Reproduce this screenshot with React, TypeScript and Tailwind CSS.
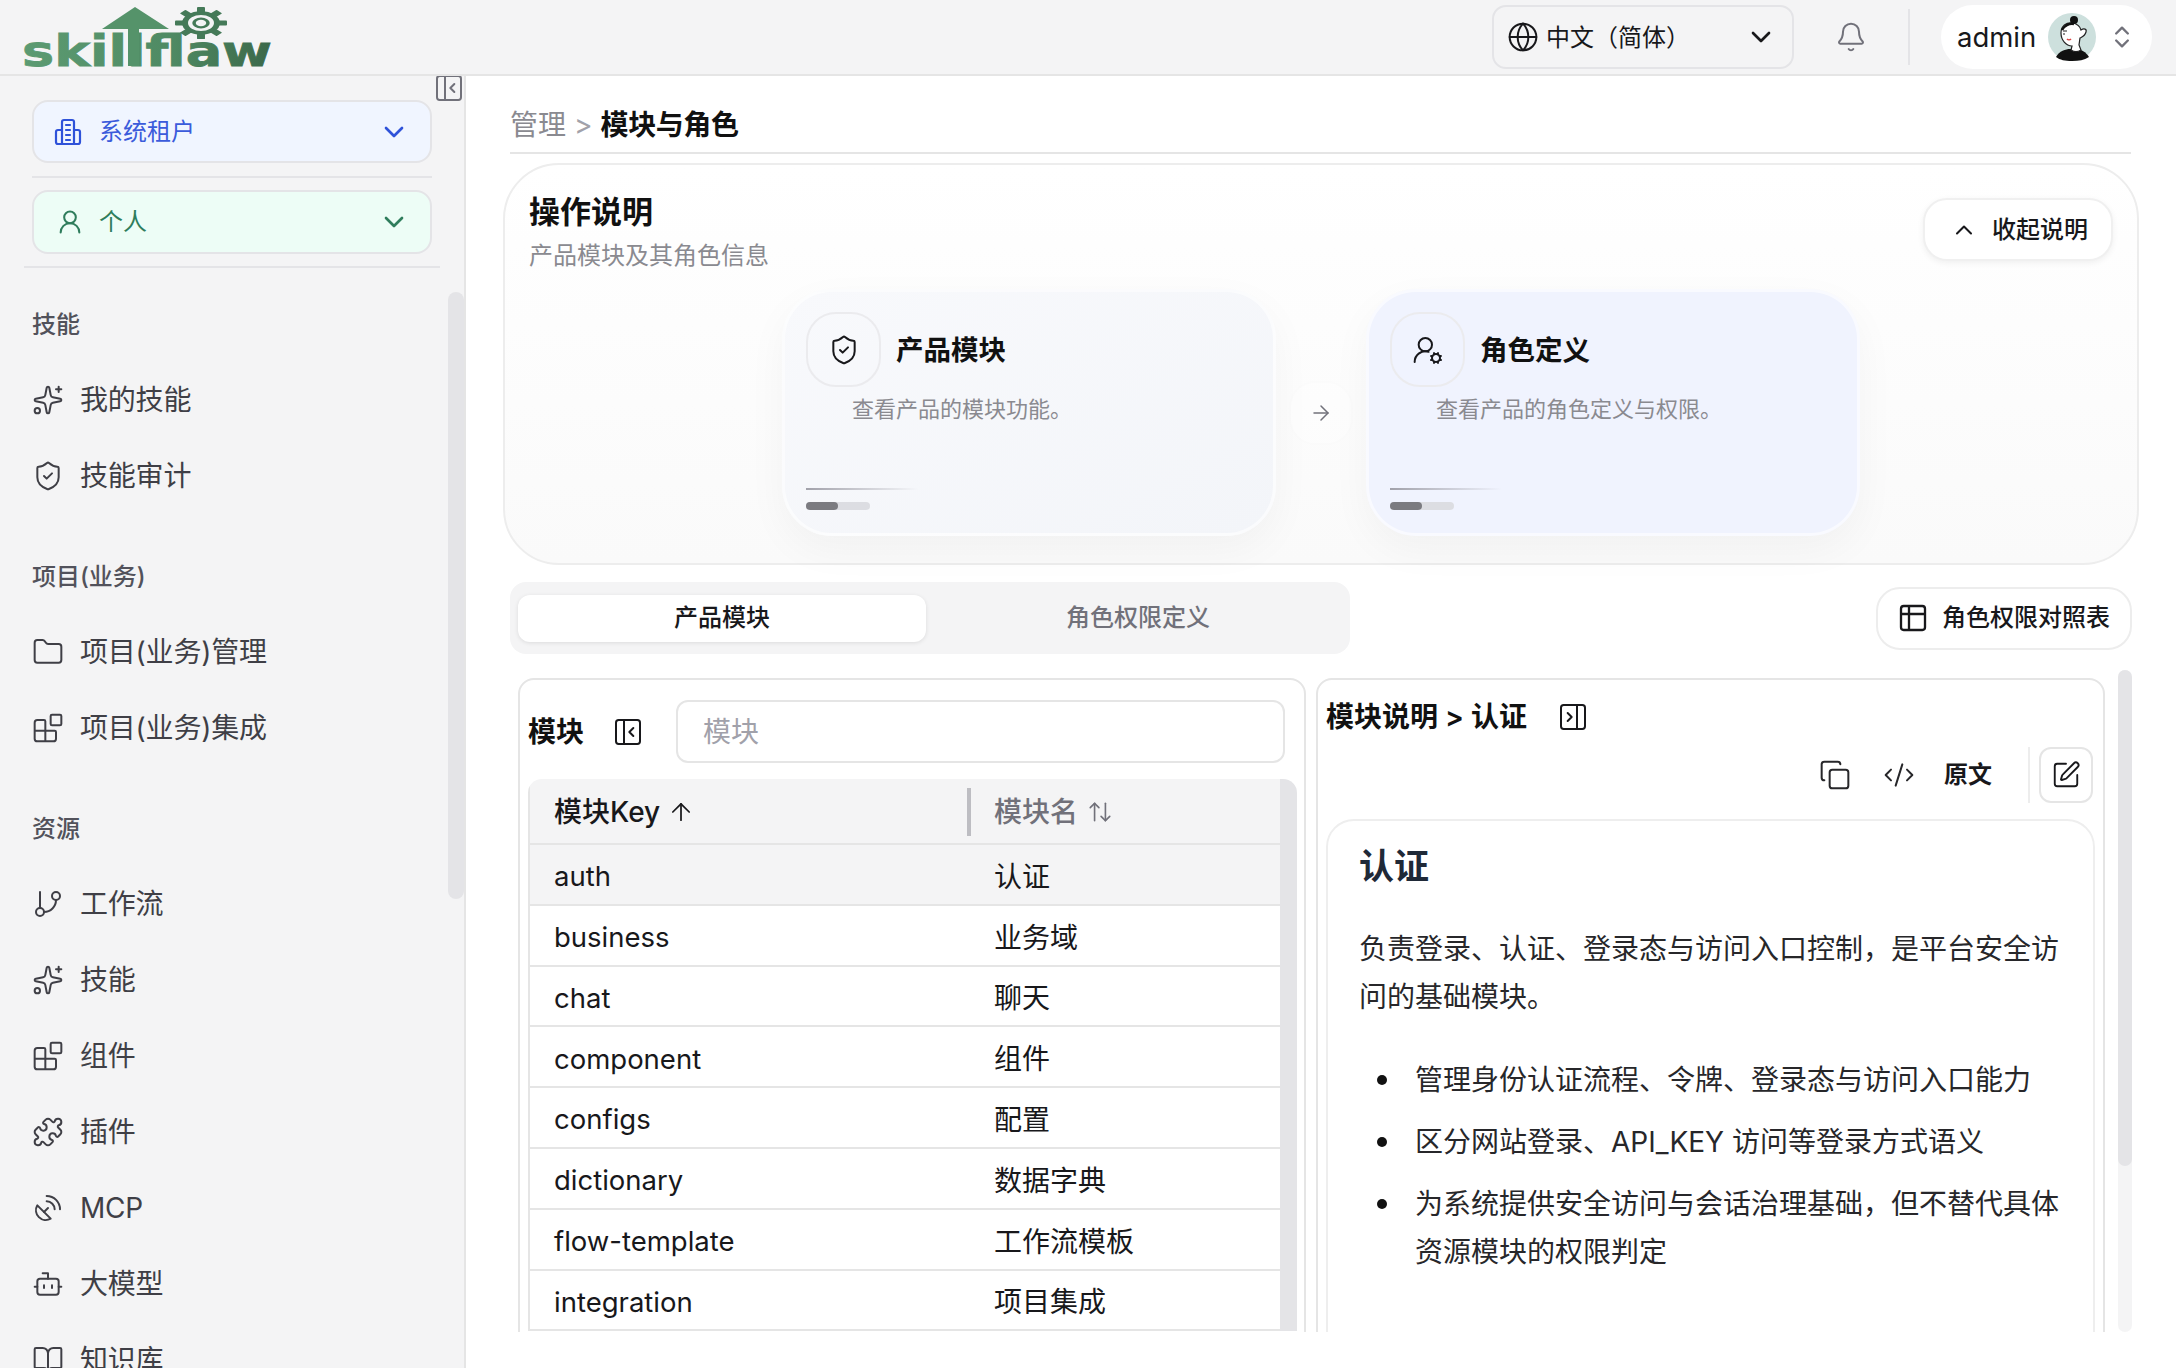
import {
  ArrowRight,
  ArrowUp,
  ArrowUpDown,
  Bell,
  Blocks,
  Bot,
  BookOpen,
  ChevronDown,
  ChevronUp,
  ChevronsUpDown,
  CodeXml,
  Copy,
  Folder,
  GitBranch,
  Globe,
  PanelLeftClose,
  PanelRightClose,
  Puzzle,
  SatelliteDish,
  ShieldCheck,
  Sparkles,
  SquarePen,
  Table2,
  UserRound,
  UserRoundCog,
} from "lucide-react";

const navSections = [
  {
    title: "技能",
    items: [
      { label: "我的技能", icon: Sparkles },
      { label: "技能审计", icon: ShieldCheck },
    ],
  },
  {
    title: "项目(业务)",
    items: [
      { label: "项目(业务)管理", icon: Folder },
      { label: "项目(业务)集成", icon: Blocks },
    ],
  },
  {
    title: "资源",
    items: [
      { label: "工作流", icon: GitBranch },
      { label: "技能", icon: Sparkles },
      { label: "组件", icon: Blocks },
      { label: "插件", icon: Puzzle },
      { label: "MCP", icon: SatelliteDish },
      { label: "大模型", icon: Bot },
      { label: "知识库", icon: BookOpen },
    ],
  },
];

const modules = [
  { key: "auth", name: "认证" },
  { key: "business", name: "业务域" },
  { key: "chat", name: "聊天" },
  { key: "component", name: "组件" },
  { key: "configs", name: "配置" },
  { key: "dictionary", name: "数据字典" },
  { key: "flow-template", name: "工作流模板" },
  { key: "integration", name: "项目集成" },
];

const bullets = [
  "管理身份认证流程、令牌、登录态与访问入口能力",
  "区分网站登录、API_KEY 访问等登录方式语义",
  "为系统提供安全访问与会话治理基础，但不替代具体资源模块的权限判定",
];

const Logo = () => (
  <svg width="256" height="72" viewBox="0 0 256 72" className="ml-[20px]">
    <defs>
      <linearGradient id="logoGreen" x1="0" y1="0" x2="1" y2="0">
        <stop offset="0" stopColor="#5c9b72" />
        <stop offset="0.6" stopColor="#4f8a63" />
        <stop offset="1" stopColor="#3b6849" />
      </linearGradient>
    </defs>
    <text
      x="2"
      y="65"
      fontFamily="'DejaVu Sans', sans-serif"
      fontWeight="700"
      fontSize="42"
      textLength="250"
      lengthAdjust="spacingAndGlyphs"
      fill="url(#logoGreen)"
      stroke="url(#logoGreen)"
      strokeWidth="0.8"
    >
      skillflaw
    </text>
    <polygon points="115,6 149,28 119,28 119,65 108,65 108,28 82,28" fill="#55936a" />
    {/* 齿轮在原图里是被横向拉伸的椭圆 */}
    <g fill="#457a58" transform="translate(181 22) scale(1 0.62)">
      <circle r="16" fill="none" stroke="#457a58" strokeWidth="6" />
      <circle r="7" fill="none" stroke="#457a58" strokeWidth="3.5" />
      {[0, 45, 90, 135, 180, 225, 270, 315].map((a) => (
        <rect key={a} x="-4" y="-26" width="8" height="9" rx="1" transform={`rotate(${a})`} />
      ))}
    </g>
  </svg>
);

const Avatar = () => (
  <svg width="48" height="48" viewBox="0 0 48 48">
    <circle cx="24" cy="24" r="24" fill="#cde0dd" />
    <path d="M8 44c3-6 10-8 14-8h6c5 0 10 3 13 8-5 3-10 4-17 4s-12-1-16-4z" fill="#111" />
    <path d="M13 20c0-7 5-11 12-10 4 1 7 3 8 7 3-2 6-1 5 2-1 4-4 5-6 6l-1 7 2 5c-3 2-7 2-10 0l1-4c-6 0-11-6-11-13z" fill="#fff" stroke="#222" strokeWidth="1.2" />
    <path d="M14 17c2-4 7-7 12-6" fill="none" stroke="#111" strokeWidth="2.5" />
    <circle cx="26" cy="7" r="4" fill="#111" />
    <path d="M19 26c1 1 3 1 4 0" fill="none" stroke="#d64545" strokeWidth="1.6" />
    <path d="M15 18h4M15 21h2" fill="none" stroke="#222" strokeWidth="1" />
  </svg>
);

const TenantIcon = () => (
  <svg width="28" height="28" viewBox="0 0 28 28" fill="none" stroke="#2f52d9" strokeWidth="2.2" strokeLinecap="round" strokeLinejoin="round">
    <path d="M8 26V4a2 2 0 0 1 2-2h8a2 2 0 0 1 2 2v22" />
    <path d="M8 12H4a2 2 0 0 0-2 2v10a2 2 0 0 0 2 2h20a2 2 0 0 0 2-2V14a2 2 0 0 0-2-2h-4" />
    <path d="M12 7h4M12 12h4M12 17h4M12 22h4" />
  </svg>
);

const StepCard = ({
  title,
  desc,
  icon: Icon,
  bg,
}: {
  title: string;
  desc: string;
  icon: typeof ShieldCheck;
  bg: string;
}) => (
  <div className={`w-[494px] h-[247px] rounded-[50px] border-[3px] border-white/60 shadow-[0_14px_40px_rgba(0,0,0,0.04)] px-[21px] pt-[20px] pb-[23px] flex flex-col ${bg}`}>
    <div className="flex items-center gap-[15px]">
      <div className="size-[75px] rounded-[30px] border-2 border-[#ebebee] flex items-center justify-center">
        <Icon size={32} strokeWidth={1.5} className="text-[#18181b]" />
      </div>
      <span className="text-[27.5px] leading-[42px] font-semibold text-[#111]">{title}</span>
    </div>
    <p className="mt-[7px] pl-[46px] text-[22px] leading-[30px] text-[#8a8a90]">{desc}</p>
    <div className="mt-auto">
      <div className="h-[2px] w-[112px] bg-linear-to-r from-[#a1a1aa] to-transparent" />
      <div className="mt-[12px] h-[8px] w-[64px] rounded-full bg-[#dcdde2]">
        <div className="h-full w-[32px] rounded-full bg-[#7b7b80]" />
      </div>
    </div>
  </div>
);

export default function App() {
  return (
    <div className="w-[2176px] h-[1368px] bg-white overflow-hidden flex flex-col font-[Inter,'Noto_Sans_CJK_SC',sans-serif] text-[#18181b]">
      <header className="h-[76px] shrink-0 flex items-center bg-[#f4f4f5] border-b-2 border-[#e5e5e5]">
        <Logo />
        <div className="ml-auto flex items-center mr-[24px]">
          <div className="w-[302px] h-[64px] rounded-[14px] border-2 border-[#e4e4e7] flex items-center pl-[13px] pr-[15px]">
            <Globe size={32} strokeWidth={1.5} />
            <span className="ml-[7px] text-[24px] pt-[1px]">中文（简体）</span>
            <ChevronDown size={32} strokeWidth={2} className="ml-auto" />
          </div>
          <Bell size={32} strokeWidth={1.5} className="ml-[41px] text-[#71717a]" />
          <div className="ml-[41px] w-[2px] h-[56px] bg-[#e4e4e7]" />
          <div className="ml-[31px] w-[211px] h-[64px] rounded-full bg-white flex items-center pl-[16px]">
            <span className="text-[27.5px] w-[91px] pt-[1px]">admin</span>
            <Avatar />
            <ChevronsUpDown size={28} strokeWidth={2} className="ml-[12px] text-[#71717a]" />
          </div>
        </div>
      </header>

      <div className="flex-1 min-h-0 flex">
        <aside className="relative w-[466px] shrink-0 bg-[#f4f4f5] border-r-2 border-[#e5e5e5] overflow-hidden pt-[24px]">
          <PanelLeftClose size={32} strokeWidth={1.5} className="absolute right-[-1px] top-[-4px] text-[#71717a]" />
          <div className="absolute left-[448px] top-[216px] w-[16px] h-[607px] rounded-full bg-[#e4e4e7]" />

          <div className="ml-[32px] w-[400px] h-[63px] rounded-[16px] border-2 border-[#e4e4e7] bg-[#f0f5ff] flex items-center pl-[20px] pr-[20px] text-[#3b5bdb]">
            <TenantIcon />
            <span className="ml-[17px] text-[24px]">系统租户</span>
            <ChevronDown size={32} strokeWidth={2} className="ml-auto text-[#2f52d9]" />
          </div>
          <div className="ml-[32px] mt-[13px] w-[400px] h-[2px] bg-[#e4e4e7]" />
          <div className="ml-[32px] mt-[12px] w-[400px] h-[64px] rounded-[16px] border-2 border-[#e4e4e7] bg-[#edfdf6] flex items-center pl-[22px] pr-[20px] text-[#2f7d5c]">
            <UserRound size={28} strokeWidth={1.75} />
            <span className="ml-[15px] text-[24px]">个人</span>
            <ChevronDown size={32} strokeWidth={2} className="ml-auto" />
          </div>
          <div className="ml-[24px] mt-[12px] w-[416px] h-[2px] bg-[#e4e4e7]" />

          <nav className="mt-[39px] flex flex-col gap-[45px]">
            {navSections.map((section) => (
              <div key={section.title}>
                <div className="ml-[32px] mb-[23px] h-[32px] pt-[2px] text-[24px] leading-[32px] font-medium text-[#52525b]">
                  {section.title}
                </div>
                {section.items.map((item) => (
                  <div key={item.label} className="h-[76px] flex items-center pl-[32px] text-[#3f3f46]">
                    <item.icon size={32} strokeWidth={1.5} />
                    <span className="ml-[16px] text-[28px] tracking-[-0.2px]">{item.label}</span>
                  </div>
                ))}
              </div>
            ))}
          </nav>
        </aside>

        <main className="flex-1 min-w-0 h-[1256px] overflow-hidden flex flex-col">
          <div className="ml-[44px] mr-[45px] h-[78px] shrink-0 pt-[21px] flex items-center border-b-2 border-[#e5e5e5] text-[28px]">
            <span className="text-[#8a8a90]">管理</span>
            <span className="mx-[8px] text-[#a1a1aa]">&gt;</span>
            <span className="font-semibold text-[#111] tracking-[-0.4px]">模块与角色</span>
          </div>

          <section className="mt-[9px] mx-[37px] h-[402px] shrink-0 rounded-[56px] border-2 border-[#ededed] bg-linear-to-b from-white to-[#fafafa]">
            <div className="flex items-start justify-between pl-[24px] pr-[24px] pt-[25px]">
              <div>
                <h2 className="text-[31px] leading-[44px] font-semibold text-[#111]">操作说明</h2>
                <p className="mt-[6px] text-[24px] leading-[32px] text-[#8a8a90]">产品模块及其角色信息</p>
              </div>
              <button className="mt-[8px] w-[190px] h-[63px] rounded-[24px] border-2 border-[#f0f0f0] bg-white shadow-[0_2px_6px_rgba(0,0,0,0.06)] flex items-center pl-[25px] text-[24px] font-medium">
                <ChevronUp size={28} strokeWidth={1.75} />
                <span className="ml-[14px]">收起说明</span>
              </button>
            </div>
            <div className="mt-[17px] flex justify-center items-center">
              <StepCard
                title="产品模块"
                desc="查看产品的模块功能。"
                icon={ShieldCheck}
                bg="bg-linear-to-br from-[#f8f9fc] to-[#f3f5f9]"
              />
              <div className="mx-[15px] size-[60px] rounded-[24px] bg-white/40 flex items-center justify-center shadow-[0_0_12px_rgba(0,0,0,0.012)]">
                <ArrowRight size={24} strokeWidth={1.5} className="text-[#71717a]" />
              </div>
              <StepCard
                title="角色定义"
                desc="查看产品的角色定义与权限。"
                icon={UserRoundCog}
                bg="bg-[#f0f3fe]"
              />
            </div>
          </section>

          <div className="mt-[17px] ml-[44px] mr-[44px] h-[72px] shrink-0 flex items-center justify-between">
            <div className="w-[840px] h-[72px] rounded-[16px] bg-[#f4f4f5] flex items-center gap-[8px] px-[8px] text-[24px] font-medium">
              <div className="w-[408px] h-[47px] rounded-[12px] bg-white shadow-[0_1px_4px_rgba(0,0,0,0.1)] flex items-center justify-center text-[#18181b]">
                产品模块
              </div>
              <div className="w-[408px] h-[47px] flex items-center justify-center text-[#71717a]">角色权限定义</div>
            </div>
            <button className="w-[256px] h-[63px] rounded-[24px] border-2 border-[#ededed] bg-white flex items-center pl-[19px] text-[24px] font-medium">
              <Table2 size={32} strokeWidth={1.75} />
              <span className="ml-[13px]">角色权限对照表</span>
            </button>
          </div>

          <div className="mt-[24px] ml-[52px] flex items-start">
            {/* 左侧模块列表 */}
            <div className="w-[788px] h-[720px] shrink-0 rounded-[16px] border-2 border-[#e5e5e5] px-[8px] pt-[20px]">
              <div className="flex items-center h-[63px]">
                <span className="w-[56px] text-[28px] font-semibold text-[#111]">模块</span>
                <PanelLeftClose size={32} strokeWidth={1.5} className="ml-[28px]" />
                <div className="ml-[32px] w-[609px] h-[63px] rounded-[12px] border-2 border-[#e5e5e5] flex items-center pl-[25px] text-[28px] text-[#a1a1aa]">
                  模块
                </div>
              </div>
              <div className="mt-[16px] w-[769px] flex rounded-t-[14px] overflow-hidden">
                <div className="flex-1 min-w-0 border-l-2 border-[#e5e5e5]">
                  <div className="h-[66px] flex items-center bg-[#f4f4f5] border-b-2 border-[#e5e5e5] text-[28px] font-medium">
                    <div className="w-[464px] flex items-center pl-[24px] pt-[1px]">
                      <span>模块Key</span>
                      <ArrowUp size={28} strokeWidth={1.5} className="ml-[7px]" />
                      <div className="ml-auto mr-[23px] w-[4px] h-[48px] bg-[#bdbdc2]" />
                    </div>
                    <div className="flex items-center text-[#71717a] pt-[1px]">
                      <span>模块名</span>
                      <ArrowUpDown size={26} strokeWidth={1.5} className="ml-[9px]" />
                    </div>
                  </div>
                  {modules.map((m, i) => (
                    <div
                      key={m.key}
                      className={`h-[60.8px] flex items-center border-b-2 border-[#e5e5e5] pt-[5px] ${i === 0 ? "bg-[#f4f4f5]" : "bg-white"}`}
                    >
                      <span className="w-[464px] pl-[24px] text-[27.5px]">{m.key}</span>
                      <span className="text-[28px]">{m.name}</span>
                    </div>
                  ))}
                </div>
                <div className="w-[17px] shrink-0 bg-[#e4e4e7]" />
              </div>
            </div>

            {/* 右侧模块说明 */}
            <div className="ml-[10px] w-[789px] h-[720px] shrink-0 rounded-[16px] border-2 border-[#e5e5e5] px-[8px] pt-[7px]">
              <div className="h-[60px] flex items-center">
                <span className="text-[28px] font-semibold text-[#111]">模块说明 &gt; 认证</span>
                <PanelRightClose size={32} strokeWidth={1.5} className="ml-[30px]" />
              </div>
              <div className="h-[56px] flex items-center justify-end pr-[2px]">
                <Copy size={32} strokeWidth={1.5} className="text-[#27272a]" />
                <CodeXml size={32} strokeWidth={1.5} className="ml-[32px] text-[#27272a]" />
                <span className="ml-[29px] text-[24px] font-semibold">原文</span>
                <div className="ml-[36px] w-[2px] h-[56px] bg-[#ededed]" />
                <div className="ml-[9px] w-[54px] h-[56px] rounded-[12px] border-2 border-[#e5e5e5] flex items-center justify-center">
                  <SquarePen size={30} strokeWidth={1.5} />
                </div>
              </div>
              <article className="mt-[16px] w-[769px] h-[600px] rounded-[28px] border-2 border-[#eeeeee] pl-[31px] pr-[33px] pt-[21px] text-[28px] leading-[48px] text-[#27272a]">
                <h1 className="text-[35px] leading-[48px] font-semibold text-[#1f2937]">认证</h1>
                <p className="mt-[35px]">负责登录、认证、登录态与访问入口控制，是平台安全访问的基础模块。</p>
                <ul className="mt-[35px] flex flex-col gap-[14px]">
                  {bullets.map((b) => (
                    <li key={b} className="flex items-start">
                      <span className="ml-[18px] mr-[28px] mt-[19px] size-[10px] shrink-0 rounded-full bg-[#111]" />
                      <span>{b}</span>
                    </li>
                  ))}
                </ul>
              </article>
            </div>

            <div className="-mt-[8px] ml-[13px] w-[14px] h-[662px] shrink-0 rounded-full bg-[#f4f4f5]">
              <div className="w-full h-[496px] rounded-full bg-[#e4e4e7]" />
            </div>
          </div>
        </main>
      </div>
    </div>
  );
}
